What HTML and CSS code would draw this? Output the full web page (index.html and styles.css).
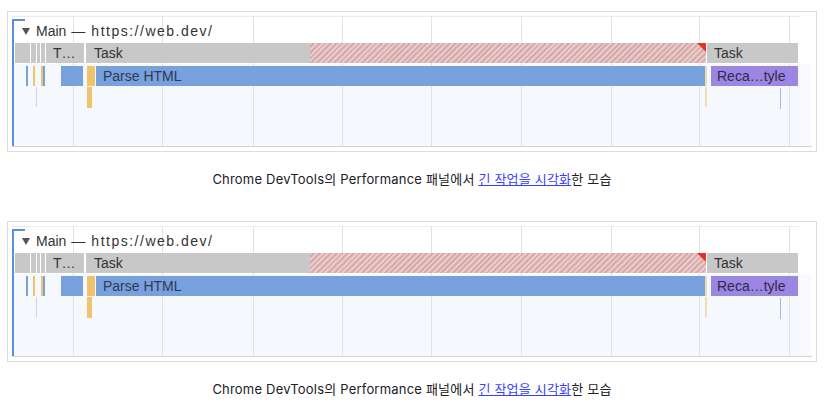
FILE: index.html
```html
<!DOCTYPE html>
<html lang="ko">
<head>
<meta charset="utf-8">
<title>Long task</title>
<link rel="stylesheet" href="styles.css">
</head>
<body>
<main class="page">
  <figure class="fig">
    <div class="frame">
      <div class="chart">
        <div class="topline"></div>
        <div class="lower"></div>
        <div class="bottomline"></div>
        <div class="grid g1"></div><div class="grid g2"></div><div class="grid g3"></div>
        <div class="grid g4"></div><div class="grid g5"></div><div class="grid g6"></div>
        <div class="grid g7"></div><div class="grid g8"></div><div class="grid g9"></div>
        <div class="bracket"></div>
        <div class="thread"><span class="tri"></span>Main <span class="dash">—</span> <span class="url">https://web.dev/</span></div>
        <div class="bar task t-a"></div><div class="bar task t-b"></div><div class="bar task t-c"></div>
        <div class="bar task t-d"></div>
        <div class="bar task t-e">T…</div>
        <div class="bar task t-f">Task</div>
        <div class="bar hatch"><span class="flag"></span></div>
        <div class="bar task t-g">Task</div>
        <div class="bar r2 blue b-a"></div>
        <div class="bar r2 yellow y-a"></div>
        <div class="bar r2 yellow y-b"></div>
        <div class="bar r2 blue b-b"></div>
        <div class="bar r2 blue b-c"></div>
        <div class="bar r2 yellow y-c"></div>
        <div class="bar r2 blue parse">Parse HTML</div>
        <div class="bar r2 paleyellow y-d"></div>
        <div class="bar r2 purple recalc">Reca…tyle</div>
        <div class="bar r3 thin-gray"></div>
        <div class="bar r3 yellow y-e"></div>
        <div class="bar r3 paleyellow y-f"></div>
        <div class="bar r3 thin-blue"></div>
      </div>
    </div>
    <figcaption class="cap">Chrome DevTools의 Performance 패널에서 <a class="link" href="#">긴 작업을 시각화</a>한 모습</figcaption>
  </figure>
  <figure class="fig">
    <div class="frame">
      <div class="chart">
        <div class="topline"></div>
        <div class="lower"></div>
        <div class="bottomline"></div>
        <div class="grid g1"></div><div class="grid g2"></div><div class="grid g3"></div>
        <div class="grid g4"></div><div class="grid g5"></div><div class="grid g6"></div>
        <div class="grid g7"></div><div class="grid g8"></div><div class="grid g9"></div>
        <div class="bracket"></div>
        <div class="thread"><span class="tri"></span>Main <span class="dash">—</span> <span class="url">https://web.dev/</span></div>
        <div class="bar task t-a"></div><div class="bar task t-b"></div><div class="bar task t-c"></div>
        <div class="bar task t-d"></div>
        <div class="bar task t-e">T…</div>
        <div class="bar task t-f">Task</div>
        <div class="bar hatch"><span class="flag"></span></div>
        <div class="bar task t-g">Task</div>
        <div class="bar r2 blue b-a"></div>
        <div class="bar r2 yellow y-a"></div>
        <div class="bar r2 yellow y-b"></div>
        <div class="bar r2 blue b-b"></div>
        <div class="bar r2 blue b-c"></div>
        <div class="bar r2 yellow y-c"></div>
        <div class="bar r2 blue parse">Parse HTML</div>
        <div class="bar r2 paleyellow y-d"></div>
        <div class="bar r2 purple recalc">Reca…tyle</div>
        <div class="bar r3 thin-gray"></div>
        <div class="bar r3 yellow y-e"></div>
        <div class="bar r3 paleyellow y-f"></div>
        <div class="bar r3 thin-blue"></div>
      </div>
    </div>
    <figcaption class="cap">Chrome DevTools의 Performance 패널에서 <a class="link" href="#">긴 작업을 시각화</a>한 모습</figcaption>
  </figure>
</main>
</body>
</html>
```
FILE: styles.css
```css
html, body {
  margin: 0;
  padding: 0;
  background: #ffffff;
}
.page {
  padding: 11px 9px 0 7px;
}
.fig {
  margin: 0 0 32px 0;
}
.fig:last-child {
  margin-bottom: 0;
}
.frame {
  border: 1px solid #dcdcdc;
  padding: 4px;
  height: 131px;
}
.chart {
  position: relative;
  width: 800px;
  height: 131px;
  background: #ffffff;
  overflow: hidden;
  font-family: "Liberation Sans", Arial, sans-serif;
  color: #333333;
}
.topline {
  position: absolute;
  left: 0; top: 0;
  width: 788px; height: 1px;
  background: #ececec;
}
.lower {
  position: absolute;
  left: 0; top: 48px;
  width: 800px; height: 82px;
  background: linear-gradient(to right, #f5f8fd 0, #f5f8fd 788px, #f9fafd 788px);
}
.bottomline {
  position: absolute;
  left: 0; top: 130px;
  width: 800px; height: 1px;
  background: #d4d4d4;
}
.grid {
  position: absolute;
  top: 0; height: 130px;
  width: 1px;
  background: #e2e2e4;
}
.g1 { left: 61px; }
.g2 { left: 150px; }
.g3 { left: 241px; }
.g4 { left: 330px; }
.g5 { left: 419px; }
.g6 { left: 509px; }
.g7 { left: 599px; }
.g8 { left: 687px; }
.g9 { left: 777px; }
.bracket {
  position: absolute;
  left: 0; top: 3px;
  width: 2px; height: 127px;
  background: #5b8fdb;
}
.bracket::before {
  content: "";
  position: absolute;
  left: 0; top: 0;
  width: 13px; height: 2px;
  background: #5b8fdb;
}
.thread {
  position: absolute;
  left: 10px; top: 6px;
  height: 18px;
  line-height: 18px;
  font-size: 14px;
  color: #333333;
  white-space: nowrap;
  display: flex;
  align-items: center;
}
.tri {
  width: 0; height: 0;
  border-top: 7px solid #555555;
  border-left: 4px solid transparent;
  border-right: 4px solid transparent;
  margin-right: 6px;
  margin-top: 1px;
}
.dash {
  margin: 0 3px 0 5px;
}
.url {
  letter-spacing: 1.5px;
  margin-left: 3px;
}
.bar {
  position: absolute;
  top: 27px;
  height: 20px;
  line-height: 20px;
  font-size: 14px;
  white-space: nowrap;
  overflow: hidden;
  box-sizing: border-box;
}
.task { background: #c8c8c8; color: #333333; }
.t-a { left: 3px; width: 15px; }
.t-b { left: 19px; width: 5px; }
.t-c { left: 25px; width: 3px; }
.t-d { left: 29px; width: 4px; }
.t-e { left: 34px; width: 38px; padding-left: 7px; }
.t-f { left: 74px; width: 224px; padding-left: 8px; }
.t-g { left: 695px; width: 91px; padding-left: 7px; }
.hatch {
  left: 298px; width: 396px;
  background: repeating-linear-gradient(135deg, #e8caca 0, #e8caca 2px, #d9aaaa 2px, #d9aaaa 4px);
  overflow: visible;
}
.flag {
  position: absolute;
  right: 0; top: 0;
  width: 0; height: 0;
  border-top: 9px solid #e2322a;
  border-left: 9px solid transparent;
}
.r2 { top: 50px; height: 20px; }
.r3 { top: 71px; height: 21px; }
.blue { background: #78a0dc; color: #2c3a55; }
.yellow { background: #efc46d; }
.paleyellow { background: #f1dcae; }
.purple { background: #9c86e2; color: #2f2850; }
.b-a { left: 14px; width: 2px; }
.y-a { left: 21px; width: 2px; }
.y-b { left: 29px; width: 2px; }
.b-b { left: 31px; width: 2px; }
.b-c { left: 49px; width: 22px; }
.y-c { left: 75px; width: 8px; }
.parse { left: 84px; width: 609px; padding-left: 7px; }
.y-d { left: 693px; width: 2px; }
.recalc { left: 699px; width: 87px; padding-left: 6px; }
.thin-gray { left: 24px; width: 1px; height: 20px; background: #d4d4d4; }
.y-e { left: 75px; width: 5px; }
.y-f { left: 693px; width: 2px; height: 20px; }
.thin-blue { left: 768px; width: 1px; top: 72px; background: #a4b6e2; }
.cap {
  margin: 17px 0 0 0;
  text-align: center;
  font-family: Inter, "Noto Sans CJK KR", sans-serif;
  font-size: 13px;
  letter-spacing: 0.2px;
  line-height: 20px;
  color: #202124;
}
.link {
  color: #3740ff;
  text-decoration: underline;
}
```
